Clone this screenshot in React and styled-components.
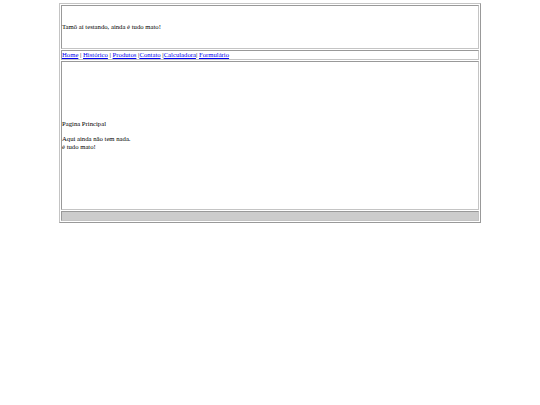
import React from 'react';
import styled, { createGlobalStyle } from 'styled-components';

const GlobalStyle = createGlobalStyle`
  html, body {
    margin: 0;
    padding: 0;
    background: #ffffff;
  }
  body {
    font-family: "Liberation Serif", "Times New Roman", serif;
    font-size: 6.7px;
    color: #000000;
  }
`;

const Layout = styled.table`
  width: 422px;
  margin: 3px auto 0;
  border: 1px solid;
  border-color: #c4c4c4 #999999 #999999 #c4c4c4;
  border-spacing: 1px;
  border-collapse: separate;
`;

const Cell = styled.td`
  height: ${(p) => p.$h}px;
  padding: 0;
  border: 1px solid;
  border-color: #999999 #c4c4c4 #c4c4c4 #999999;
  vertical-align: middle;
  background: ${(p) => (p.$gray ? '#cccccc' : 'transparent')};
  line-height: 8px;
`;

const Text = styled.p`
  margin: 6.5px 0;
`;

const NavLink = styled.a`
  color: #0000ee;
  text-decoration: underline;
`;

const links = [
  { id: 1, name: 'Home', sep: ' | ' },
  { id: 2, name: 'Histórico', sep: ' | ' },
  { id: 3, name: 'Produtos', sep: ' |' },
  { id: 4, name: 'Contato', sep: ' |' },
  { id: 5, name: 'Calculadora', sep: '| ' },
  { id: 6, name: 'Formulário', sep: '' },
];

const App = () => {
  return (
    <>
      <GlobalStyle />
      <Layout>
        <tbody>
          <tr>
            <Cell $h={42}>Tamô aí testando, ainda é tudo mato!</Cell>
          </tr>
          <tr>
            <Cell $h={8}>
              {links.map((item) => (
                <React.Fragment key={item.id}>
                  <NavLink href="#">{item.name}</NavLink>
                  {item.sep}
                </React.Fragment>
              ))}
            </Cell>
          </tr>
          <tr>
            <Cell $h={147}>
              <Text>Pagina Principal</Text>
              <Text>
                Aqui ainda não tem nada.
                <br />
                é tudo mato!
              </Text>
            </Cell>
          </tr>
          <tr>
            <Cell $h={8} $gray />
          </tr>
        </tbody>
      </Layout>
    </>
  );
};

export default App;
